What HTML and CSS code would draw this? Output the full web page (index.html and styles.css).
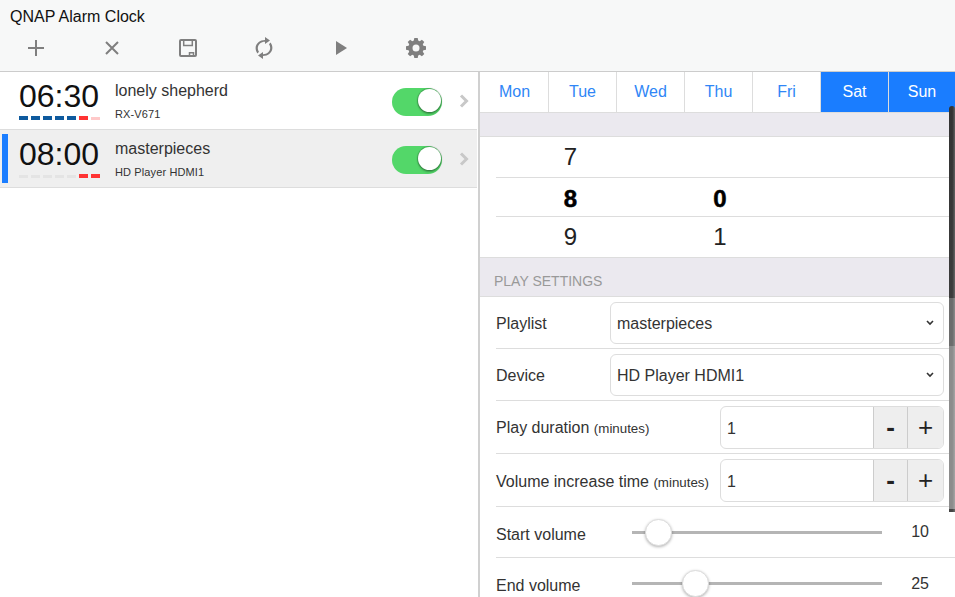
FILE: index.html
```html
<!DOCTYPE html>
<html lang="en">
<head>
<meta charset="utf-8">
<title>QNAP Alarm Clock</title>
<link rel="stylesheet" href="styles.css">
</head>
<body>
<header class="topbar">
  <div class="title">QNAP Alarm Clock</div>
  <div class="tools">
    <span class="tool"><svg width="16" height="16" viewBox="0 0 16 16"><path d="M8 0v16M0 8h16" stroke="#7f7f7f" stroke-width="2" fill="none"/></svg></span>
    <span class="tool"><svg width="14" height="14" viewBox="0 0 14 14"><path d="M1 1l12 12M13 1L1 13" stroke="#7f7f7f" stroke-width="2" fill="none"/></svg></span>
    <span class="tool"><svg width="18" height="18" viewBox="0 0 18 18"><path d="M2 1h14a1 1 0 0 1 1 1v14a1 1 0 0 1-1 1H2a1 1 0 0 1-1-1V2a1 1 0 0 1 1-1z" stroke="#7f7f7f" stroke-width="2" fill="none"/><path d="M4.700 1v5.500h8.600V1" stroke="#7f7f7f" stroke-width="1.500" fill="none"/><path d="M10.500 17v-3.200h4V17" stroke="#7f7f7f" stroke-width="1.500" fill="none"/></svg></span>
    <span class="tool"><svg width="18" height="22" viewBox="0 0 18 22"><path fill="#7f7f7f" d="M10 0l5 3.500L10 7V4.800C6 4.800 3 7.500 2.800 11c0 1.500.5 2.800 1.200 3.800L2.500 16.500C1.300 15 .6 13.100.6 11 .8 6.500 5 3 10 3zM8 22l-5-3.500L8 15v2.200c4 0 7-2.700 7.200-6.200 0-1.500-.5-2.800-1.200-3.800l1.500-1.700c1.200 1.500 1.900 3.400 1.900 5.500-.2 4.500-4.400 8-9.400 8z"/></svg></span>
    <span class="tool"><svg width="14" height="14" viewBox="0 0 14 14"><path fill="#7f7f7f" d="M3 0l11 7-11 7z"/></svg></span>
    <span class="tool"><svg width="20" height="20" viewBox="0 0 20 20"><path fill="#7f7f7f" fill-rule="evenodd" d="M8.300 0h3.400l.5 2.600 1.500.6 2.200-1.500 2.400 2.400-1.500 2.200.6 1.500 2.600.5v3.400l-2.600.5-.6 1.500 1.500 2.200-2.400 2.400-2.200-1.500-1.500.6-.5 2.600H8.300l-.5-2.600-1.500-.6-2.200 1.500-2.400-2.400 1.500-2.200-.6-1.500L0 11.700V8.300l2.600-.5.6-1.500-1.500-2.200 2.400-2.400 2.200 1.500 1.500-.6zM10 6.500a3.500 3.500 0 1 0 0 7 3.500 3.500 0 0 0 0-7z"/></svg></span>
  </div>
</header>
<main class="panes">
  <section class="list">
    <div class="alarm">
      <div class="clock">
        <div class="time">06:30</div>
        <div class="dashes"><i class="on"></i><i class="on"></i><i class="on"></i><i class="on"></i><i class="on"></i><i class="we"></i><i class="weoff"></i></div>
      </div>
      <div class="info"><div class="name">lonely shepherd</div><div class="dev">RX-V671</div></div>
      <div class="switch"><span class="knob"></span></div>
      <svg class="chev" width="10" height="16" viewBox="0 0 10 16"><path d="M2 2.500l5.500 5.500-5.500 5.500" stroke="#c8c8c8" stroke-width="3" fill="none"/></svg>
    </div>
    <div class="alarm selected">
      <div class="clock">
        <div class="time">08:00</div>
        <div class="dashes"><i class="off"></i><i class="off"></i><i class="off"></i><i class="off"></i><i class="off"></i><i class="we"></i><i class="we"></i></div>
      </div>
      <div class="info"><div class="name">masterpieces</div><div class="dev">HD Player HDMI1</div></div>
      <div class="switch"><span class="knob"></span></div>
      <svg class="chev" width="10" height="16" viewBox="0 0 10 16"><path d="M2 2.500l5.500 5.500-5.500 5.500" stroke="#c8c8c8" stroke-width="3" fill="none"/></svg>
    </div>
  </section>
  <section class="detail">
    <div class="days">
      <div class="day">Mon</div><div class="day">Tue</div><div class="day">Wed</div><div class="day">Thu</div><div class="day">Fri</div><div class="day active">Sat</div><div class="day active">Sun</div>
    </div>
    <div class="band thin"></div>
    <div class="wheel">
      <div class="wrow"><span>7</span><span></span></div>
      <div class="wrow cur"><span>8</span><span>0</span></div>
      <div class="wrow"><span>9</span><span>1</span></div>
    </div>
    <div class="band">PLAY SETTINGS</div>
    <div class="settings">
      <div class="srow"><label>Playlist</label><div class="select">masterpieces<svg width="8" height="6" viewBox="0 0 8 6"><path d="M1 1l3 3 3-3" stroke="#333" stroke-width="1.600" fill="none"/></svg></div></div>
      <div class="srow"><label>Device</label><div class="select">HD Player HDMI1<svg width="8" height="6" viewBox="0 0 8 6"><path d="M1 1l3 3 3-3" stroke="#333" stroke-width="1.600" fill="none"/></svg></div></div>
      <div class="srow"><label>Play duration <small>(minutes)</small></label><div class="stepper"><span class="val">1</span><span class="btn minus">-</span><span class="btn">+</span></div></div>
      <div class="srow"><label>Volume increase time <small>(minutes)</small></label><div class="stepper"><span class="val">1</span><span class="btn minus">-</span><span class="btn">+</span></div></div>
      <div class="srow slide"><label>Start volume</label><div class="track"><span class="thumb start"></span></div><span class="num">10</span></div>
      <div class="srow slide"><label>End volume</label><div class="track"><span class="thumb end"></span></div><span class="num">25</span></div>
    </div>
    <div class="scroll"></div>
  </section>
</main>
</body>
</html>
```
FILE: styles.css
```css
* { box-sizing: border-box; }
html, body { margin: 0; height: 100%; overflow: hidden; }
body { font-family: "Liberation Sans", Arial, sans-serif; color: #333; background: #fff; width: 955px; height: 597px; }
.topbar { height: 72px; background: #f7f8f8; border-bottom: 1px solid #ccc; padding: 8px 0 0 10px; }
.title { font-size: 16px; line-height: 18px; color: #111; }
.tools { display: flex; margin: 4px 0 0 -12px; height: 36px; align-items: center; }
.tool { width: 76px; display: flex; justify-content: center; align-items: center; }
.panes { display: flex; height: 525px; }
.list { width: 480px; border-right: 2px solid #d0d0d0; padding-right: 1px; }
.alarm { height: 58px; display: flex; align-items: flex-start; border-bottom: 1px solid #ddd; padding-left: 19px; position: relative; }
.alarm.selected { background: #efefef; }
.alarm.selected::before { content: ""; position: absolute; left: 2px; top: 4px; width: 6px; height: 49px; background: #1a7dff; }
.clock { width: 96px; padding-top: 6px; }
.time { font-size: 32px; line-height: 36px; color: #111; }
.dashes { display: flex; gap: 3px; margin-top: 2px; align-items: flex-end; height: 4px; }
.dashes i { width: 9px; height: 4px; display: block; }
.dashes .on { background: #0e5a9e; }
.dashes .off { background: #e4e4e4; height: 3px; }
.dashes .we { background: #ff3333; }
.dashes .weoff { background: #ffc9c9; height: 3px; }
.info { width: 277px; padding-top: 10px; }
.name { font-size: 16px; line-height: 18px; color: #333; }
.dev { font-size: 11px; line-height: 13px; margin-top: 8px; color: #333; letter-spacing: .12px; }
.switch { width: 50px; height: 28px; margin-top: 16px; border-radius: 14px; background: #53d769; position: relative; }
.knob { position: absolute; right: 1px; top: 1px; width: 23px; height: 23px; border-radius: 50%; background: #fff; box-shadow: 0 0 1px 1px rgba(0,0,0,.22), 0 2px 2px rgba(0,0,0,.25); }
.chev { margin: 21px 0 0 17px; }
.detail { flex: 1; position: relative; overflow: hidden; }
.days { display: flex; height: 41px; border-bottom: 1px solid #ddd; padding-left: 1px; }
.day { width: 68px; border-right: 1px solid #ddd; display: flex; align-items: center; justify-content: center; font-size: 16px; color: #2f86f6; }
.day.active { background: #1a7dff; color: #fff; }
.day:last-child { border-right: 0; width: 66px; }
.band { height: 39px; background: #ebe9ef; border-bottom: 1px solid #ddd; font-size: 14px; color: #999; padding: 15px 0 0 14px; line-height: 16px; }
.band.thin { height: 24px; padding: 0; }
.wheel { padding-left: 16px; }
.wrow { display: grid; grid-template-columns: 149px 150px; height: 41px; border-bottom: 1px solid #ddd; font-size: 24px; color: #222; line-height: 40px; text-align: center; }
.wrow:nth-child(2) { height: 39px; line-height: 41px; }
.wrow:last-child { margin-left: -16px; padding-left: 16px; }
.wrow.cur { font-weight: bold; color: #000; -webkit-text-stroke: .5px #000; }
.settings { padding-left: 16px; }
.srow { display: flex; align-items: center; justify-content: space-between; height: 52px; border-bottom: 1px solid #ddd; padding-right: 11px; font-size: 16px; color: #333; }
.srow label { padding-top: 2px; }
.srow:nth-child(3) { height: 53px; }
.srow:nth-child(4) { height: 53px; }
.srow:nth-child(4) label { padding-top: 3px; }
.srow:nth-child(5) { height: 51px; }
.srow small { font-size: 13.33px; }
.select { width: 334px; height: 42px; border: 1px solid #ddd; border-radius: 6px; display: flex; align-items: center; justify-content: space-between; padding: 2px 9px 0 6px; font-size: 16px; color: #333; }
.select svg { margin-top: -1px; }
.stepper { width: 224px; height: 43px; border: 1px solid #ddd; border-radius: 6px; display: flex; align-items: stretch; overflow: hidden; }
.val { flex: 1; padding: 1px 0 0 6px; line-height: 41px; font-size: 16px; }
.btn { width: 36px; background: #eee; border-left: 1px solid #ccc; text-align: center; font-size: 26px; line-height: 40px; color: #222; }
.btn.minus { width: 34px; font-weight: bold; }
.slide { justify-content: flex-start; }
.slide label { width: 136px; padding-top: 4px; }
.srow:nth-child(5) label { padding-top: 5px; }
.track { width: 250px; height: 3px; background: #b5b5b5; position: relative; }
.thumb { position: absolute; top: -12px; width: 27px; height: 27px; border-radius: 50%; background: #fff; border: 1px solid #ddd; box-shadow: 0 1px 3px rgba(0,0,0,.3); }
.thumb.start { left: 13px; }
.thumb.end { left: 50px; }
.num { width: 47px; text-align: right; }
.scroll { position: absolute; right: 0; top: 34px; width: 6px; height: 406px; border-radius: 3px 3px 0 0; background: linear-gradient(to right, rgba(255,255,255,0) 55%, rgba(255,255,255,.22)), linear-gradient(to bottom, #333 0, #3c3c3c 192px, #6c6c6c 192px, #6c6c6c 240px, #8c8c8c 240px, #8c8c8c 403px, #444 403px); }
```
